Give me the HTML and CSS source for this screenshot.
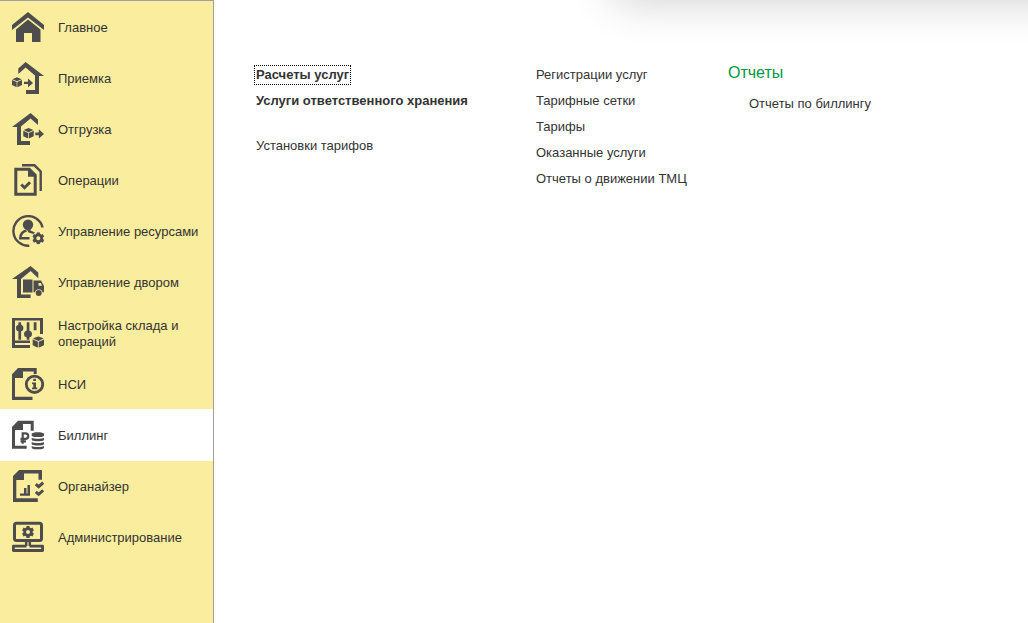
FILE: index.html
```html
<!DOCTYPE html>
<html lang="ru">
<head>
    <meta charset="UTF-8">
    <meta name="viewport" content="width=device-width, initial-scale=1.0">
    <title>Биллинг</title>
    <link rel="stylesheet" href="styles.css">
</head>
<body>
    <svg class="sprite" aria-hidden="true">
        <symbol id="cube" viewBox="0 0 12 12">
            <path d="M6 0L11.6 2.4 6 4.9 0.4 2.4zM0 3.2L5.6 5.7V12L0 9.4zM12 3.2L6.4 5.7V12L12 9.4z"/>
        </symbol>
        <symbol id="gear" viewBox="0 0 12 12">
            <circle cx="6" cy="6" r="3.4" fill="none" stroke="currentColor" stroke-width="2.8"/>
            <path d="M4.4 0h3.2v2.4H4.4zM4.4 9.6h3.2V12H4.4zM0 4.400l1.600-2.800 2.100 1.200-1.600 2.800zM8.300 9.200l1.600-2.800L12 7.600l-1.600 2.800zM0 7.600l2.100-1.200 1.600 2.800-2.100 1.200zM8.300 2.800l2.100-1.200L12 4.400 9.900 5.600z"/>
        </symbol>
    </svg>

    <nav class="sidebar">
        <a class="item" href="#">
            <svg class="icon" viewBox="0 0 32 32">
                <path d="M16 1L32 14v5L16 6.5 0 19v-5z"/>
                <path d="M16 8.500L28.500 18.500V31H20v-9h-8v9H4V18.500z"/>
            </svg>
            <span>Главное</span>
        </a>
        <a class="item" href="#">
            <svg class="icon" viewBox="0 0 32 32">
                <path d="M13.6 0L32 14h-5v18H14v-4h9V13.5L13.6 5.5 6.3 12V6.6z"/>
                <use href="#cube" x="0" y="15" width="10" height="10.5"/>
                <path d="M12 19.700h4v-3.200l5 4.400-5 4.400v-3.200h-4z"/>
            </svg>
            <span>Приемка</span>
        </a>
        <a class="item" href="#">
            <svg class="icon" viewBox="0 0 32 32">
                <path d="M18.6 0L0 14h5v18h13v-4H9V13.5l9.6-8 7.4 6.5V6.6z"/>
                <use href="#cube" x="11" y="15" width="11" height="10.5"/>
                <path d="M23.300 19.600h3.500v-3.400l5.200 4.700-5.200 4.700v-3.400h-3.500z"/>
            </svg>
            <span>Отгрузка</span>
        </a>
        <a class="item" href="#">
            <svg class="icon" viewBox="0 0 32 32">
                <path class="line" stroke-width="2.400" d="M10 1.300h12.500l6.200 6.200V27"/>
                <path class="line" stroke-width="3" d="M3.8 5.2h13.4l6 6v19H3.8z"/>
                <path d="M16 4l8.700 8.700H16z"/>
                <path class="line" stroke-width="3" d="M9.300 20.500l3.200 3.200 5.500-5.500"/>
            </svg>
            <span>Операции</span>
        </a>
        <a class="item" href="#">
            <svg class="icon" viewBox="0 0 32 32">
                <path class="line" stroke-width="2.400" d="M30.600 12.500A14.800 14.800 0 1 0 17.300 30.700"/>
                <circle cx="16" cy="9.800" r="5.200"/>
                <path d="M14 13h4.500v2.500l4.500 2-1.500 1.500-5-1.500z"/>
                <path class="line" stroke-width="2.600" d="M14.500 15.500C10.500 16.500 8.500 19 8.300 23.200H17.500"/>
                <use href="#gear" x="20.300" y="17.300" width="12" height="12"/>
            </svg>
            <span>Управление ресурсами</span>
        </a>
        <a class="item" href="#">
            <svg class="icon" viewBox="0 0 32 32">
                <path d="M18.600 0L0 13h5v19h13.600v-3.600H9V13l9.600-8 7.700 7.300V6.600z"/>
                <path d="M11 13.500h9.500v13H11z"/>
                <path d="M21.500 14.500h7.500l3 5.500v6.200h-1.500a3.900 3.900 0 0 0-7.500 0h-1.500zM26.500 17v2.700h3.700l-1.400-2.700z" fill-rule="evenodd"/>
                <circle cx="26.700" cy="27" r="3"/>
            </svg>
            <span>Управление двором</span>
        </a>
        <a class="item" href="#">
            <svg class="icon" viewBox="0 0 32 32">
                <path d="M0 1h31v16h-3V3.600H3V23.500h15v2.500H3v2h15v3H0z"/>
                <path d="M6.400 5.300h2.700v17.500H6.400zM14.700 5.300h2.700v17.500h-2.700zM21.700 5.300h2.800v8h-2.800z"/>
                <ellipse cx="7.700" cy="11" rx="3.700" ry="3.600"/>
                <ellipse cx="16" cy="17" rx="4" ry="3.600"/>
                <use href="#cube" x="20.300" y="19.300" width="12" height="11.500"/>
            </svg>
            <span>Настройка склада и операций</span>
        </a>
        <a class="item" href="#">
            <svg class="icon" viewBox="0 0 32 32">
                <path d="M6 0h18.700v6h-3V3.500H11V10H3v18.700h17.500V32H0V6.300z"/>
                <circle class="line" cx="22.500" cy="16.300" r="8.200" stroke-width="2.800"/>
                <path d="M21.300 10.800h2.600v2.200h-2.600zM20 14.500h4v5h1.300v1.700H20v-1.700h1.300v-3.300H20z"/>
            </svg>
            <span>НСИ</span>
        </a>
        <a class="item active" href="#" aria-current="page">
            <svg class="icon" viewBox="0 0 32 32">
                <path d="M6 1.700h15.700v10h-3V5H11v6H3v15.700h11.700v3H0V8z"/>
                <path class="line" stroke-width="2.200" d="M10.700 24.700V14.300h2.700a2.800 2.800 0 0 1 0 5.600H8.500M8.500 22.400h5.500"/>
                <path d="M19.700 14.800c0-2.200 12.300-2.200 12.300 0v1.600c0 2.200-12.300 2.200-12.300 0zM19.700 18.800c2 1.300 10.300 1.300 12.300 0v2c0 2-12.300 2-12.300 0zM19.700 22.900c2 1.300 10.300 1.300 12.300 0v2c0 2-12.300 2-12.300 0zM19.700 27c2 1.300 10.300 1.300 12.300 0v1.700c0 2.200-12.300 2.200-12.300 0z"/>
            </svg>
            <span>Биллинг</span>
        </a>
        <a class="item" href="#">
            <svg class="icon" viewBox="0 0 32 32">
                <path d="M7 0h23v9.700h-3.500V3.500H12V10H4.300v18.300h21.500V32H1V6z"/>
                <path d="M8 23.500h4V18h2.500v5.500h1V15H18v10.700H8z"/>
                <path class="line" stroke-width="3" d="M23.800 14.200l2.800 2.500 4.600-4M23.800 21.800l2.800 2.500 4.600-4"/>
            </svg>
            <span>Органайзер</span>
        </a>
        <a class="item" href="#">
            <svg class="icon" viewBox="0 0 32 32">
                <rect class="line" x="2.500" y="2.300" width="27" height="17.200" rx="2" stroke-width="3"/>
                <use href="#gear" x="10" y="5" width="12" height="12"/>
                <path class="line" stroke-width="2.500" d="M14.200 20v5M17.800 20v5"/>
                <path class="line" stroke-width="2.800" stroke-linejoin="round" d="M14.500 25.200H1.400v4.300h29.200v-4.300H17.500"/>
            </svg>
            <span>Администрирование</span>
        </a>
    </nav>

    <main class="content">
        <div class="column">
            <a class="link important focused" href="#">Расчеты услуг</a>
            <a class="link important" href="#">Услуги ответственного хранения</a>
            <a class="link separated" href="#">Установки тарифов</a>
        </div>
        <div class="column">
            <a class="link" href="#">Регистрации услуг</a>
            <a class="link" href="#">Тарифные сетки</a>
            <a class="link" href="#">Тарифы</a>
            <a class="link" href="#">Оказанные услуги</a>
            <a class="link" href="#">Отчеты о движении ТМЦ</a>
        </div>
        <section class="column reports">
            <h2>Отчеты</h2>
            <a class="link" href="#">Отчеты по биллингу</a>
        </section>
    </main>
</body>
</html>
```
FILE: styles.css
```css
* {
    padding: 0;
    margin: 0;
    box-sizing: border-box;
}

:root {
    --sidebar-color: #fbed9e;
    --border-color: #a0a0a0;
    --icon-color: #4d4d4d;
    --text-color: #333;
    --heading-color: #009646;
}

body {
    display: flex;
    min-height: 100vh;
    font-family: Arial, "Liberation Sans", sans-serif;
    font-size: 13px;
    line-height: 16px;
    color: var(--text-color);
    background-color: white;
}

a {
    color: inherit;
    text-decoration: none;
}

.sprite {
    position: absolute;
    width: 0;
    height: 0;
}

.sidebar {
    flex: none;
    width: 214px;
    background-color: var(--sidebar-color);
    border-top: 1px solid var(--border-color);
    border-right: 1px solid var(--border-color);
}

.item {
    display: flex;
    align-items: center;
    gap: 14px;
    min-height: 51px;
    padding: 9px 12px 8px;
}

.item span {
    padding-top: 2px;
}

.item:hover,
.item.active {
    background-color: white;
    box-shadow: 0 1px white;
}

.icon {
    flex: none;
    width: 32px;
    height: 32px;
    color: var(--icon-color);
    fill: currentColor;
}

.icon .line {
    fill: none;
    stroke: currentColor;
}

.content {
    position: relative;
    flex: 1;
    display: grid;
    grid-template-columns: 280px 192px 1fr;
    align-items: start;
    padding: 67px 20px 20px 42px;
    overflow: hidden;
}

/* shadow of the panel that hangs above the section */
.content::before {
    content: "";
    position: absolute;
    left: 400px;
    right: -60px;
    bottom: 100%;
    height: 100px;
    box-shadow: 0 0 45px rgba(0, 0, 0, 0.2);
}

.column {
    display: flex;
    flex-direction: column;
    align-items: flex-start;
    gap: 10px;
}

.important {
    font-weight: bold;
}

.focused {
    outline: 1px dotted black;
    outline-offset: 1px;
}

.separated {
    margin-top: 19px;
}

.reports {
    gap: 17px;
}

.reports h2 {
    font-size: 16px;
    font-weight: normal;
    line-height: 12px;
    color: var(--heading-color);
}

.reports .link {
    margin-left: 21px;
}
```
